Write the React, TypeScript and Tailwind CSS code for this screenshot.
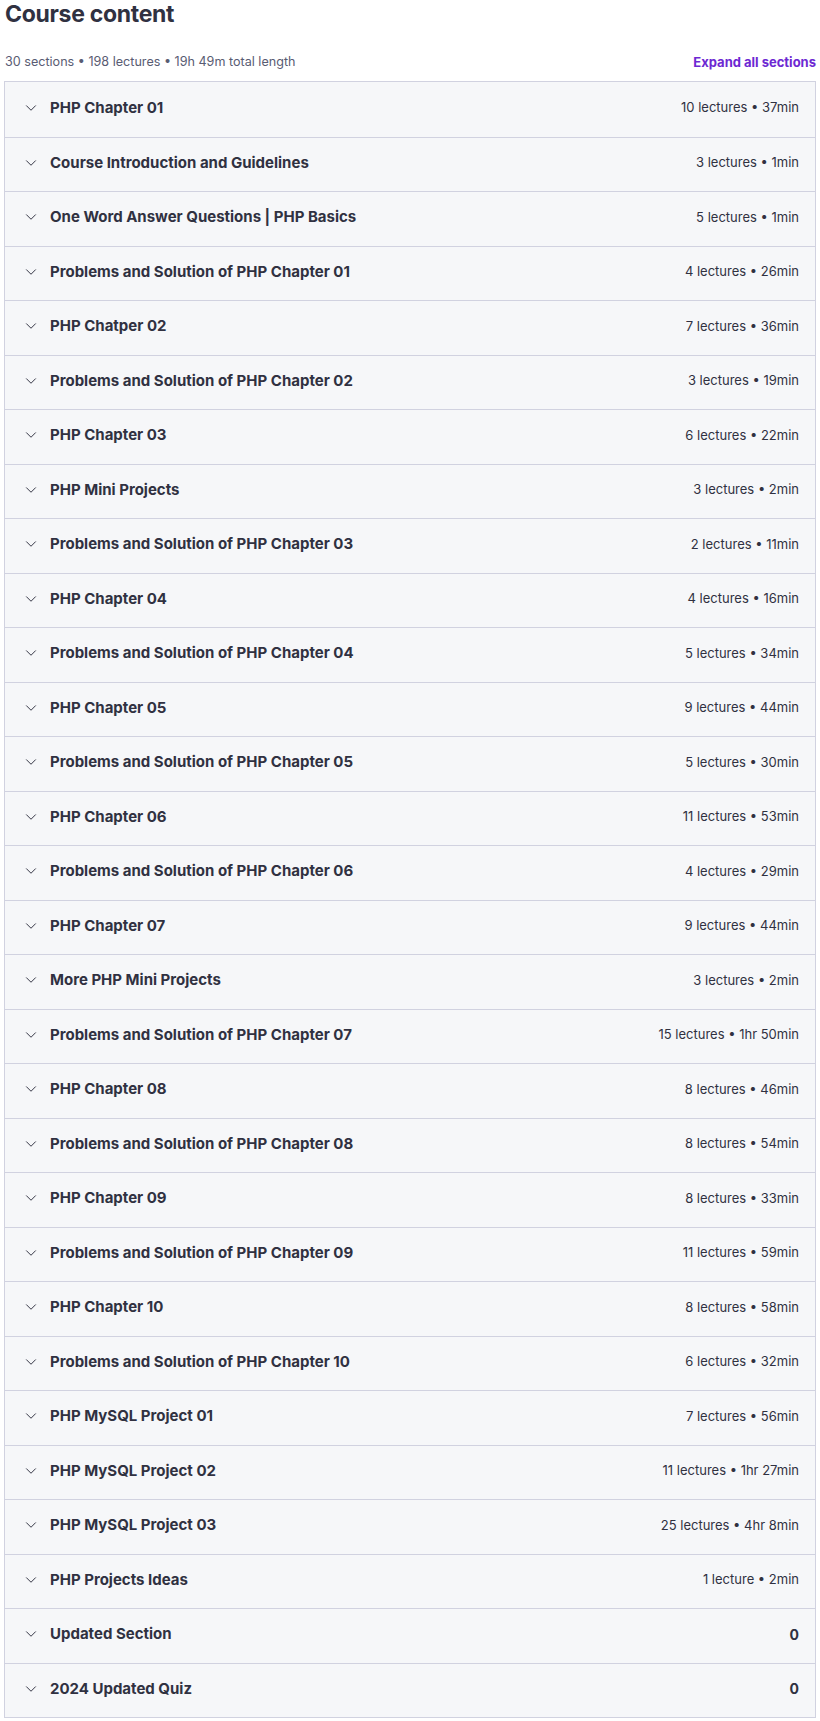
import { ChevronDown } from 'lucide-react';

const sections: [string, string][] = [
  ['PHP Chapter 01', '10 lectures • 37min'],
  ['Course Introduction and Guidelines', '3 lectures • 1min'],
  ['One Word Answer Questions | PHP Basics', '5 lectures • 1min'],
  ['Problems and Solution of PHP Chapter 01', '4 lectures • 26min'],
  ['PHP Chatper 02', '7 lectures • 36min'],
  ['Problems and Solution of PHP Chapter 02', '3 lectures • 19min'],
  ['PHP Chapter 03', '6 lectures • 22min'],
  ['PHP Mini Projects', '3 lectures • 2min'],
  ['Problems and Solution of PHP Chapter 03', '2 lectures • 11min'],
  ['PHP Chapter 04', '4 lectures • 16min'],
  ['Problems and Solution of PHP Chapter 04', '5 lectures • 34min'],
  ['PHP Chapter 05', '9 lectures • 44min'],
  ['Problems and Solution of PHP Chapter 05', '5 lectures • 30min'],
  ['PHP Chapter 06', '11 lectures • 53min'],
  ['Problems and Solution of PHP Chapter 06', '4 lectures • 29min'],
  ['PHP Chapter 07', '9 lectures • 44min'],
  ['More PHP Mini Projects', '3 lectures • 2min'],
  ['Problems and Solution of PHP Chapter 07', '15 lectures • 1hr 50min'],
  ['PHP Chapter 08', '8 lectures • 46min'],
  ['Problems and Solution of PHP Chapter 08', '8 lectures • 54min'],
  ['PHP Chapter 09', '8 lectures • 33min'],
  ['Problems and Solution of PHP Chapter 09', '11 lectures • 59min'],
  ['PHP Chapter 10', '8 lectures • 58min'],
  ['Problems and Solution of PHP Chapter 10', '6 lectures • 32min'],
  ['PHP MySQL Project 01', '7 lectures • 56min'],
  ['PHP MySQL Project 02', '11 lectures • 1hr 27min'],
  ['PHP MySQL Project 03', '25 lectures • 4hr 8min'],
  ['PHP Projects Ideas', '1 lecture • 2min'],
  ['Updated Section', '0'],
  ['2024 Updated Quiz', '0'],
];

export default function App() {
  return (
    <div className="bg-white px-[4px] text-[#303141]" style={{ fontFamily: 'Inter, "Noto Sans", sans-serif' }}>
      <h2 className="text-[23px] leading-[29px] font-bold tracking-[-0.3px] pl-px">Course content</h2>
      <div className="flex items-end justify-between h-[52px] pb-[9px]">
        <span className="text-[12.6px] text-[#595c73] pl-px">30 sections • 198 lectures • 19h 49m total length</span>
        <button className="text-[13px] font-bold text-[#6d28d2]">Expand all sections</button>
      </div>
      <div className="border border-[#d1d2e0] bg-[#f6f7f9]">
        {sections.map(([title, meta], i) => {
          const zero = meta === '0';
          return (
            <div
              key={i}
              className={`flex items-center justify-between h-[54.5px] pl-[17px] pr-[16px] pb-[3px] ${i > 0 ? 'border-t border-[#d1d2e0]' : ''}`}
            >
              <div className="flex items-center gap-[10px]">
                <ChevronDown className="w-[18px] h-[18px] text-[#303141]" strokeWidth={1.3} />
                <span className="text-[15px] font-bold">{title}</span>
              </div>
              <span className={zero ? 'text-[14px] font-bold text-[#303141]' : 'text-[13px] text-[#303141]'}>{meta}</span>
            </div>
          );
        })}
      </div>
    </div>
  );
}
